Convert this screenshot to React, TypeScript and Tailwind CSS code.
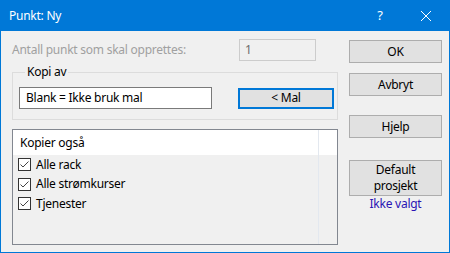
import React from "react";

function Btn({ children, className = "" }: { children: React.ReactNode; className?: string }) {
  return (
    <div
      className={
        "w-[93px] flex items-center justify-center text-center leading-[16px] bg-[#e1e1e1] border border-[#adadad] text-black " +
        className
      }
    >
      {children}
    </div>
  );
}

function Check({ label }: { label: string }) {
  return (
    <div className="h-[19.5px] flex items-center pl-[5px]">
      <div className="w-[13px] h-[13px] border border-[#333333] bg-white flex items-center justify-center">
        <svg width="11" height="11" viewBox="0 0 11 11">
          <path d="M1.5 5.5 L4 8 L9.5 2.5" fill="none" stroke="#444" strokeWidth="1" />
        </svg>
      </div>
      <span className="ml-[5px] leading-[16px]">{label}</span>
    </div>
  );
}

export default function App() {
  return (
    <div className="w-[450px] h-[253px] flex flex-col bg-[#f0f0f0] border border-t-0 border-[#0078d7] overflow-hidden font-['Noto_Sans',sans-serif] text-[12px] tracking-[-0.25px] text-black">
      <div className="h-[31px] shrink-0 bg-[#0078d7] flex items-center text-white">
        <span className="ml-[8px] flex-1 leading-[16px]">Punkt: Ny</span>
        <div className="w-[46px] h-full flex items-center justify-center text-[13px]">?</div>
        <div className="w-[46px] h-full flex items-center justify-center">
          <svg width="10" height="10" viewBox="0 0 10 10">
            <path d="M0 0 L10 10 M10 0 L0 10" stroke="white" strokeWidth="1" />
          </svg>
        </div>
      </div>
      <div className="flex-1 flex pl-[11px]">
        <div className="w-[326px] flex flex-col">
          <div className="mt-[8px] h-[22px] flex items-center justify-between">
            <span className="text-[#a0a0a0] leading-[16px]">Antall punkt som skal opprettes:</span>
            <div className="w-[77px] h-[22px] mr-[22px] border border-[#cccccc] bg-[#f0f0f0] flex items-center pl-[5px] text-[#6d6d6d]">
              1
            </div>
          </div>
          <fieldset className="mt-[3px] border border-[#dcdcdc] pl-[6px] pr-[3px] pb-[10px]">
            <legend className="ml-[6px] px-[2px] leading-[16px]">Kopi av</legend>
            <div className="mt-[7px] flex items-center justify-between">
              <div className="w-[193px] h-[22px] border border-[#7a7a7a] bg-white flex items-center pl-[6px] leading-[16px]">
                Blank = Ikke bruk mal
              </div>
              <div className="w-[96px] h-[21px] border-2 border-[#0078d7] bg-[#e1e1e1] flex items-center justify-center leading-[16px]">
                &lt; Mal
              </div>
            </div>
          </fieldset>
          <div className="mt-[9px] h-[116px] border border-[#828790] flex">
            <div className="w-[305px] flex flex-col">
              <div className="h-[25px] bg-white flex items-center pl-[7px] leading-[16px]">Kopier også</div>
              <Check label="Alle rack" />
              <Check label="Alle strømkurser" />
              <Check label="Tjenester" />
            </div>
            <div className="w-[1px] bg-[#e3e8ef]" />
            <div className="flex-1 flex flex-col">
              <div className="h-[25px] bg-white" />
            </div>
          </div>
        </div>
        <div className="ml-[11px] flex flex-col">
          <Btn className="mt-[9px] h-[23px]">OK</Btn>
          <Btn className="mt-[10px] h-[23px]">Avbryt</Btn>
          <Btn className="mt-[19px] h-[23px]">Hjelp</Btn>
          <Btn className="mt-[22px] h-[36px]">
            Default
            <br />
            prosjekt
          </Btn>
          <div className="text-center leading-[16px] text-[#2a14b4]">Ikke valgt</div>
        </div>
      </div>
    </div>
  );
}
